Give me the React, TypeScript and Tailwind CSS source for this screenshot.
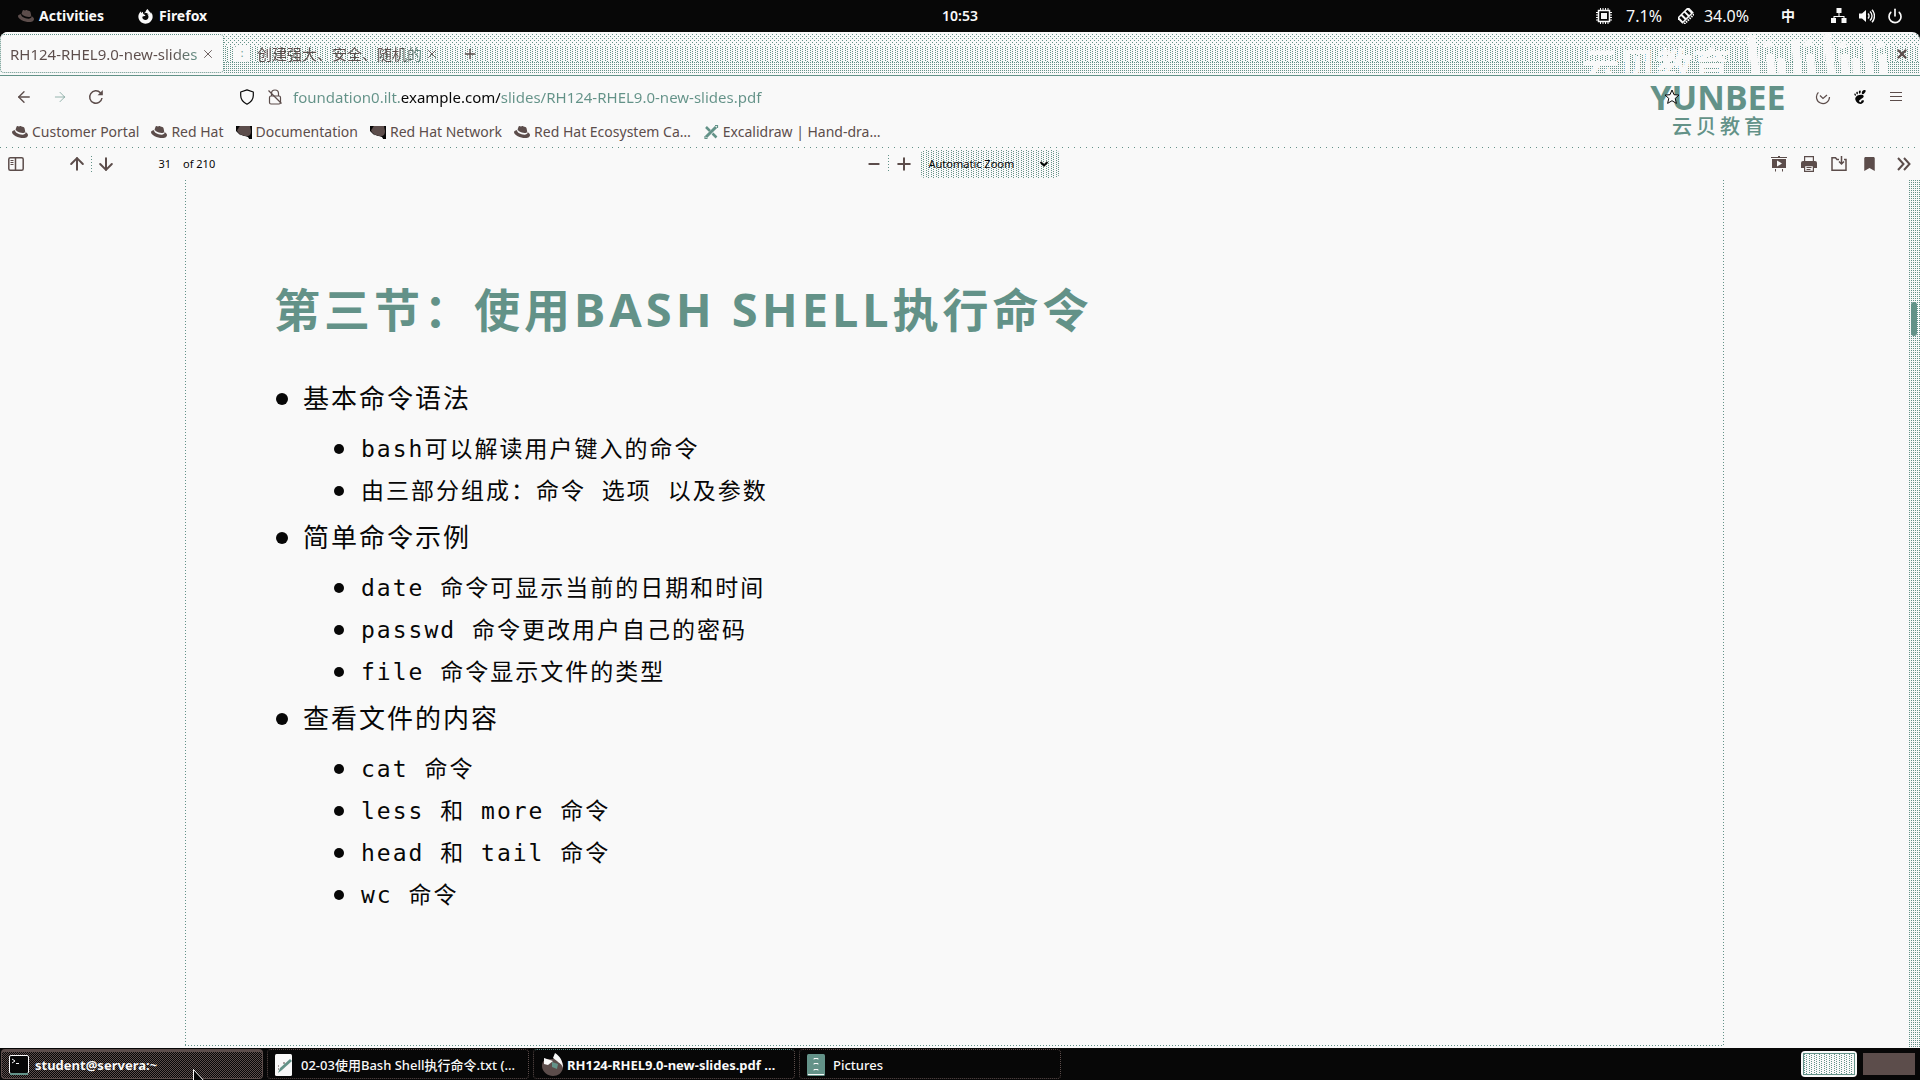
import type { ReactNode } from "react";
import { FaFirefoxBrowser, FaRedhat, FaBookmark } from "react-icons/fa";
import { SiGnome } from "react-icons/si";
import { ArrowDown, ArrowLeft, ArrowRight, ArrowUp, Minus, Plus, Power, X } from "lucide-react";

const DOTS_DENSE =
  "[background-image:conic-gradient(at_1px_1px,transparent_75%,#639288_0)] [background-size:2px_2px]";
const DOTS_MID =
  "[background-image:conic-gradient(at_1px_1px,transparent_75%,#639288_0),conic-gradient(at_1px_1px,transparent_75%,#639288_0)] [background-size:5px_2px] [background-position:0_0,2px_1px]";
const DOTS_LIGHT =
  "[background-image:conic-gradient(at_1px_1px,transparent_75%,#639288_0),conic-gradient(at_1px_1px,transparent_75%,#639288_0)] [background-size:4px_4px] [background-position:0_0,2px_2px]";
const DOTS_BROWN =
  "[background-image:conic-gradient(at_1px_1px,transparent_75%,#5c4d4b_0),conic-gradient(at_1px_1px,transparent_75%,#5c4d4b_0)] [background-size:2px_2px] [background-position:0_0,1px_1px]";
const ROW_DOTS =
  "[background-image:linear-gradient(90deg,#639288_1px,transparent_1px)] [background-size:6px_1px]";
const SLIDE_ROW_DOTS =
  "[background-image:linear-gradient(90deg,#639288_1px,transparent_1px)] [background-size:3px_1px]";
const COLUMN_DOTS =
  "[background-image:linear-gradient(#639288_1px,transparent_1px)] [background-size:1px_3px]";

function IconButton({ label, className, children }: { label: string; className: string; children: ReactNode }) {
  return (
    <button type="button" aria-label={label} className={`flex shrink-0 items-center justify-center ${className}`}>
      {children}
    </button>
  );
}

function ChipIcon() {
  return (
    <svg viewBox="0 0 16 16" className="size-4" stroke="currentColor" fill="none" aria-hidden="true">
      <rect x="2.500" y="2.500" width="11" height="11" strokeWidth="1.500" />
      <rect x="5.500" y="5.500" width="5" height="5" fill="currentColor" />
      <path d="M4.500 0v2M7 0v2M9.500 0v2M12 0v2M4.500 14v2M7 14v2M9.500 14v2M12 14v2M0 4.500h2M0 7h2M0 9.500h2M0 12h2M14 4.500h2M14 7h2M14 9.500h2M14 12h2" />
    </svg>
  );
}

function NetworkIcon() {
  return (
    <svg viewBox="0 0 16 16" className="size-4" fill="currentColor" aria-hidden="true">
      <path d="M5.5 0h5v5h-5zM0 10h5v5H0zM10.5 10h5v5h-5zM7.5 5h1v3h5v2h-1V9h-9v1h-1V8h5z" />
    </svg>
  );
}

function VolumeIcon() {
  return (
    <svg viewBox="0 0 16 16" className="size-4" fill="none" stroke="currentColor" strokeWidth="1.4" aria-hidden="true">
      <path d="M0 5.5h3L7 2v12L3 10.5H0z" fill="currentColor" stroke="none" />
      <path d="M9 5.5a3.5 3.5 0 0 1 0 5M11 3.5a6 6 0 0 1 0 9M13 1.8a9 9 0 0 1 0 12.4" />
    </svg>
  );
}

function MemoryIcon() {
  return (
    <svg viewBox="0 0 16 16" className="size-4" aria-hidden="true">
      <g transform="rotate(-45 8 8)">
        <rect x="0" y="3" width="16" height="8" fill="#f9f9f9" />
        <path d="M2 4.500h2.500v5H2zM6.500 4.500H9v5H6.500zM11 4.500h2.500v5H11z" fill="#070707" />
        <path d="M1 12.500h14" stroke="#f9f9f9" strokeWidth="2" strokeDasharray="1.500 1" />
      </g>
    </svg>
  );
}

function ReloadIcon() {
  return (
    <svg viewBox="0 0 16 16" className="size-4" fill="none" stroke="#5c4d4b" strokeWidth="1.5" aria-hidden="true">
      <path d="M14 9a6.2 6.2 0 1 1-1.6-5.2L14 5.4" />
      <path d="M14.8 1v5.2H9.6z" fill="#5c4d4b" stroke="none" />
    </svg>
  );
}

function ShieldIcon() {
  return (
    <svg viewBox="0 0 16 16" className="size-4" fill="none" stroke="#070707" strokeWidth="1.2" aria-hidden="true">
      <path d="M8 .9 14.3 3v3.6c0 3.8-2.6 6.8-6.3 8.6C4.3 13.400 1.700 10.400 1.700 6.600V3z" strokeLinejoin="round" />
    </svg>
  );
}

function LockSlashIcon() {
  return (
    <svg viewBox="0 0 16 16" className="size-4" fill="none" stroke="#5c4d4b" strokeWidth="1.2" aria-hidden="true">
      <path d="M4.500 7V4.500a3.500 3.500 0 0 1 7 0V7" />
      <rect x="2.500" y="7" width="11" height="8" rx="1.500" />
      <path d="m1.500 1.500 13 13" />
    </svg>
  );
}

function StarIcon() {
  return (
    <svg viewBox="0 0 16 16" className="size-4" fill="#f9f9f9" stroke="#070707" strokeWidth="1" aria-hidden="true">
      <path d="m8 1 2 4.700 5 .4-3.800 3.300 1.200 5L8 11.700 3.600 14.400l1.200-5L1 6.100l5-.4z" />
    </svg>
  );
}

function PocketIcon() {
  return (
    <svg viewBox="0 0 16 16" className="size-4" fill="none" stroke="#5c4d4b" strokeWidth="1.2" aria-hidden="true">
      <path d="M3.400 3.400A6.500 6.500 0 1 0 14.500 8M5 6.500 8 9.500l4-3.500" />
    </svg>
  );
}

function SidebarIcon() {
  return (
    <svg viewBox="0 0 16 16" className="size-4" fill="none" stroke="#5c4d4b" strokeWidth="1.500" aria-hidden="true">
      <rect x=".8" y="1.800" width="14.400" height="12.400" rx="1.500" />
      <path d="M7.500 2v12" />
      <path d="M2.500 4.500h3M2.500 6.500h3M2.500 8.500h3" strokeWidth="1" />
    </svg>
  );
}

function PresentIcon() {
  return (
    <svg viewBox="0 0 16 16" className="size-4" fill="#5c4d4b" aria-hidden="true">
      <path d="M0 1h7V0h2v1h7v1H0z" />
      <path d="M1 3h14v9H1z" />
      <path d="m6 4.500 5 3-5 3z" fill="#f9f9f9" />
      <path d="M4 13h1v2.500H4zM11 13h1v2.500h-1z" />
    </svg>
  );
}

function PrintIcon() {
  return (
    <svg viewBox="0 0 16 16" className="size-4" fill="#5c4d4b" aria-hidden="true">
      <path d="M3 0h10v5h-1.200V1.200H4.200V5H3z" />
      <path d="M2 5h12a2 2 0 0 1 2 2v5h-3V9H3v3H0V7a2 2 0 0 1 2-2z" />
      <path d="M3 9h10v7H3zm1.200 1.200v4.600h7.600v-4.600z" fillRule="evenodd" />
      <path d="M5.500 11h5v1h-5zM5.500 13h4v1h-4z" />
    </svg>
  );
}

function SaveIcon() {
  return (
    <svg viewBox="0 0 16 16" className="size-4" fill="none" stroke="#5c4d4b" strokeWidth="1.500" aria-hidden="true">
      <path d="M8 3.500H6L4.500 1.800H1V14.200h14V3.500h-2" />
      <path d="M10.500 0v8M8 5.500 10.500 8 13 5.500" />
    </svg>
  );
}

function ExcalidrawIcon() {
  return (
    <svg viewBox="0 0 16 16" className="size-4" stroke="#639288" fill="none" aria-hidden="true">
      <path d="M3 13 13 3" strokeWidth="3" />
      <path d="m3 3 4 4M9.500 9.500l4 4" strokeWidth="2.500" />
      <path d="M12 1.500h2.500V4M2 12v2.500h2.500" strokeWidth="1.200" />
    </svg>
  );
}

function ShadowmanIcon() {
  return (
    <svg viewBox="0 0 16 16" className="size-4" aria-hidden="true">
      <path d="M0 2h16v13h-3l-1-2-4-1-4-1-4-4z" fill="#070707" />
      <path d="M1 6c2-1 1-3 3-4h10l1 5c0 3-1 5-4 5-4 0-9-2-10-6z" fill="#5c4d4b" />
      <path d="m3 10 4 2 4 1 2 2-4 .500z" fill="#f9f9f9" />
    </svg>
  );
}

const indicatorText = "text-[16px] leading-5";

function TopBar() {
  return (
    <header className="grid h-8 shrink-0 grid-cols-[1fr_auto_1fr] items-center bg-[#070707] text-[14px] leading-5 text-[#f9f9f9]">
      <div className="flex items-center gap-[34px] pl-[18px] font-bold">
        <button type="button" className="flex items-center gap-[5px]">
          <FaRedhat className="size-4 text-[#5c4d4b]" />
          Activities
        </button>
        <button type="button" className="flex items-center gap-[6px]">
          <FaFirefoxBrowser className="size-[15px]" />
          Firefox
        </button>
      </div>
      <time className="font-semibold">10:53</time>
      <div className="flex items-center justify-end pr-[17px]">
        <span className="mr-3.5">
          <ChipIcon />
        </span>
        <span className={`mr-4 ${indicatorText}`}>7.1%</span>
        <span className="mr-2.5">
          <MemoryIcon />
        </span>
        <span className={`mr-8 ${indicatorText}`}>34.0%</span>
        <button type="button" className="mr-9 font-bold">中</button>
        <button type="button" aria-label="System menu" className="flex items-center gap-3">
          <NetworkIcon />
          <VolumeIcon />
          <Power className="size-4" strokeWidth={2.5} />
        </button>
      </div>
    </header>
  );
}

function StreamMark() {
  return (
    <div className="pointer-events-none absolute top-0.5 right-7 flex items-start gap-4 text-[#f9f9f9]" aria-hidden="true">
      <span className="mt-3 text-[37px] leading-[40px] font-bold">云贝教育</span>
      <svg viewBox="0 0 146 52" className="h-[52px] w-[146px]" fill="none" stroke="#f9f9f9" strokeWidth="8">
        <path d="m5 2 6 46M24 20l2 30M49 6l4 42M35 24l2 24M64 20l2 28M22 7l1 6M62 6l1 6" />
        <path d="m81 0 5 46M98 20l2 28M120 5l5 42M110 24l1 24M136 20l3 28M96 8l1 6M134 8l1 6" />
      </svg>
    </div>
  );
}

function TabStrip() {
  return (
    <div className="relative flex h-11 shrink-0 items-center overflow-hidden rounded-t-lg border-b border-[#639288] bg-[#f9f9f9]">
      <div className="absolute inset-0 flex flex-col py-0.5" aria-hidden="true">
        <div className={`h-3 ${DOTS_LIGHT}`} />
        <div className={`h-4 ${DOTS_MID}`} />
        <div className={`flex-1 ${DOTS_DENSE}`} />
      </div>
      <StreamMark />
      <div role="tablist" className="relative flex h-full items-center">
        <div className="flex h-full w-56 items-center bg-[#f9f9f9] py-0.5">
          <div className="flex h-full w-full items-center rounded border border-dotted border-[#639288] pr-1.5 pl-[9px]">
            <button
              type="button"
              role="tab"
              aria-selected="true"
              className="flex-1 bg-linear-to-r from-[#5c4d4b] from-85% to-[#639288] bg-clip-text text-left text-[15px] leading-5 whitespace-nowrap text-transparent"
            >
              RH124-RHEL9.0-new-slides
            </button>
            <IconButton label="Close tab" className="w-5">
              <X className="size-3.5 text-[#5c4d4b]" strokeWidth={1.5} />
            </IconButton>
          </div>
        </div>
        <div className="flex w-[222px] items-center pl-2.5">
          <span className="mr-[7px] flex size-4 items-center justify-center rounded bg-[#f9f9f9] text-[10px] text-[#639288]">:</span>
          <button
            type="button"
            role="tab"
            aria-selected="false"
            className="bg-linear-to-r from-[#5c4d4b] from-85% to-[#639288] bg-clip-text text-left text-[15px] leading-5 whitespace-nowrap text-transparent"
          >
            创建强大、安全、随机的
          </button>
          <IconButton label="Close tab" className="w-5">
            <X className="size-3.5 text-[#5c4d4b]" strokeWidth={1.5} />
          </IconButton>
        </div>
      </div>
      <IconButton label="New tab" className="relative ml-4 size-4">
        <Plus className="size-4 text-[#5c4d4b]" strokeWidth={2} />
      </IconButton>
      <IconButton label="Close window" className="relative mr-2.5 ml-auto size-4">
        <X className="size-3.5 text-[#5c4d4b]" strokeWidth={4} />
      </IconButton>
    </div>
  );
}

function NavBar() {
  return (
    <div className="flex h-[42px] shrink-0 items-center pr-[17px] pl-4">
      <IconButton label="Back" className="w-4">
        <ArrowLeft className="size-[18px] shrink-0 text-[#5c4d4b]" strokeWidth={1.8} />
      </IconButton>
      <IconButton label="Forward" className="ml-5 w-4">
        <ArrowRight className="size-4 text-[#639288]" strokeWidth={1} />
      </IconButton>
      <IconButton label="Reload" className="ml-5 w-4">
        <ReloadIcon />
      </IconButton>
      <label className="ml-[135px] flex min-w-0 flex-1 items-center">
        <ShieldIcon />
        <span className="mr-2.5 ml-3">
          <LockSlashIcon />
        </span>
        <input
          aria-label="Address"
          defaultValue="foundation0.ilt.example.com/slides/RH124-RHEL9.0-new-slides.pdf"
          className="min-w-0 flex-1 bg-[linear-gradient(90deg,#639288_108px,#070707_108px,#070707_207px,#639288_207px)] bg-clip-text text-[15px] leading-5 text-transparent outline-none"
        />
      </label>
      <IconButton label="Bookmark this page" className="relative z-10 mr-[135px] w-4">
        <StarIcon />
      </IconButton>
      <div className="flex items-center gap-[21px]">
        <IconButton label="Save to Pocket" className="w-4">
          <PocketIcon />
        </IconButton>
        <IconButton label="GNOME extensions" className="w-4">
          <SiGnome className="size-3.5 text-[#070707]" />
        </IconButton>
        <IconButton label="Open menu" className="w-3.5">
          <svg viewBox="0 0 12 12" className="size-3" stroke="#5c4d4b" aria-hidden="true">
            <path d="M0 1.500h12M0 5.500h12M0 9.500h12" />
          </svg>
        </IconButton>
      </div>
    </div>
  );
}

const hat = <FaRedhat className="size-4 text-[#5c4d4b]" />;

const bookmarks = [
  { label: "Customer Portal", icon: hat },
  { label: "Red Hat", icon: hat },
  { label: "Documentation", icon: <ShadowmanIcon /> },
  { label: "Red Hat Network", icon: <ShadowmanIcon /> },
  { label: "Red Hat Ecosystem Ca…", icon: hat },
  { label: "Excalidraw | Hand-dra…", icon: <ExcalidrawIcon /> },
];

function BookmarksBar() {
  return (
    <nav className="flex h-[30px] shrink-0 flex-col">
      <div className="flex flex-1 items-center gap-3 pb-0.5 pl-3">
        {bookmarks.map((b) => (
          <a key={b.label} href="#" className="flex items-center gap-1 text-[14px] leading-5 text-[#5c4d4b]">
            {b.icon}
            {b.label}
          </a>
        ))}
      </div>
      <div className={`h-px ${ROW_DOTS}`} />
    </nav>
  );
}

function Brand() {
  return (
    <div className="pointer-events-none absolute top-[77px] right-[132px] flex w-[140px] flex-col items-center text-[#639288]">
      <span className="text-[34px] leading-10 font-bold">YUNBEE</span>
      <span className="flex gap-1 text-[20px] leading-5 font-medium">
        <span>云</span>
        <span>贝</span>
        <span>教</span>
        <span>育</span>
      </span>
    </div>
  );
}

function PdfToolbar() {
  return (
    <div className="grid h-8 shrink-0 grid-cols-[1fr_auto_1fr] items-center text-[11px] leading-4 text-[#070707]">
      <div className="flex items-center pl-2">
        <IconButton label="Toggle sidebar" className="mr-11 w-4">
          <SidebarIcon />
        </IconButton>
        <IconButton label="Previous page" className="w-[18px]">
          <ArrowUp className="size-5 shrink-0 text-[#5c4d4b]" strokeWidth={2.4} />
        </IconButton>
        <span className={`mx-[5px] h-4 w-px ${COLUMN_DOTS}`} />
        <IconButton label="Next page" className="w-[18px]">
          <ArrowDown className="size-5 shrink-0 text-[#5c4d4b]" strokeWidth={2.4} />
        </IconButton>
        <input aria-label="Page" defaultValue="31" className="ml-3 w-11 bg-transparent text-right outline-none" />
        <span className="ml-3">of 210</span>
      </div>
      <div className="flex items-center pl-1">
        <IconButton label="Zoom out" className="w-4">
          <Minus className="size-4 text-[#5c4d4b]" strokeWidth={3} />
        </IconButton>
        <span className={`mx-1.5 h-[18px] w-px ${COLUMN_DOTS}`} />
        <IconButton label="Zoom in" className="mr-2 w-[18px]">
          <Plus className="size-5 shrink-0 text-[#5c4d4b]" strokeWidth={2.4} />
        </IconButton>
        <div className="relative">
          <select
            aria-label="Zoom"
            className={`h-7 w-[138px] appearance-none rounded-sm pl-2 text-[11px] text-[#070707] ${DOTS_MID}`}
          >
            <option>Automatic Zoom</option>
          </select>
          <svg viewBox="0 0 10 8" className="pointer-events-none absolute top-2.5 right-2.5 h-2 w-2.5" fill="none" stroke="#070707" strokeWidth="2" aria-hidden="true">
            <path d="m1.500 2 3.500 3.500L8.500 2" />
          </svg>
        </div>
      </div>
      <div className="flex items-center justify-end gap-3.5 pr-2">
        <IconButton label="Presentation mode" className="w-4">
          <PresentIcon />
        </IconButton>
        <IconButton label="Print" className="w-4">
          <PrintIcon />
        </IconButton>
        <IconButton label="Save" className="w-4">
          <SaveIcon />
        </IconButton>
        <IconButton label="Current view" className="w-4">
          <FaBookmark className="h-3.5 text-[#5c4d4b]" />
        </IconButton>
        <IconButton label="Tools" className="ml-[5px] w-4">
          <svg viewBox="0 0 16 16" className="size-4" fill="none" stroke="#5c4d4b" strokeWidth="2" aria-hidden="true">
            <path d="m2 2 5.500 6L2 14M8 2l5.500 6L8 14" />
          </svg>
        </IconButton>
      </div>
    </div>
  );
}

const sections = [
  { title: "基本命令语法", items: ["bash可以解读用户键入的命令", "由三部分组成：命令 选项 以及参数"] },
  {
    title: "简单命令示例",
    items: ["date 命令可显示当前的日期和时间", "passwd 命令更改用户自己的密码", "file 命令显示文件的类型"],
  },
  { title: "查看文件的内容", items: ["cat 命令", "less 和 more 命令", "head 和 tail 命令", "wc 命令"] },
];

function Slide() {
  return (
    <div className="mr-[185px] mb-0.5 ml-[185px] flex flex-1 flex-col">
      <div className="flex flex-1">
        <div className={`w-px ${COLUMN_DOTS}`} />
        <article className="flex-1 pt-[97px] pl-[88px]">
          <h1 className="text-[46px] leading-[64px] font-bold tracking-[4px] text-[#639288]">
            第三节：使用<span className="text-[47px]">BASH SHELL</span>执行命令
          </h1>
          <ul className="mt-8 font-['DejaVu_Sans_Mono','Noto_Sans_CJK_SC',monospace] text-[#070707]">
            {sections.map((s) => (
              <li key={s.title}>
                <div className="flex h-[52px] items-center pl-0.5 text-[26px] leading-9 tracking-[2px]">
                  <span className="mr-[15px] size-3 rounded-full bg-[#070707]" />
                  {s.title}
                </div>
                <ul className="mt-[3px]">
                  {s.items.map((item) => (
                    <li key={item} className="flex h-[42px] items-center pl-[60px] text-[23px] leading-8 tracking-[2px]">
                      <span className="mr-[17px] size-2.5 rounded-full bg-[#070707]" />
                      {item}
                    </li>
                  ))}
                </ul>
              </li>
            ))}
          </ul>
        </article>
        <div className={`w-px ${COLUMN_DOTS}`} />
      </div>
      <div className={`h-px ${SLIDE_ROW_DOTS}`} />
    </div>
  );
}

function Viewer() {
  return (
    <main className="flex flex-1">
      <div className="flex flex-1 flex-col">
        <Slide />
      </div>
      <div className={`relative w-[11px] ${DOTS_DENSE}`}>
        <div className="absolute top-[122px] left-0.5 h-[34px] w-1.5 rounded-sm bg-[#639288]" />
      </div>
    </main>
  );
}

const tasks = [
  {
    label: "student@servera:~",
    style: `border-[#5c4d4b] border-t-3 font-bold ${DOTS_BROWN}`,
    gap: "gap-1.5",
    icon: (
      <svg viewBox="0 0 20 20" className="size-5" fill="none" aria-hidden="true">
        <rect x=".5" y=".5" width="19" height="18" rx="1.500" fill="#070707" stroke="#f9f9f9" />
        <path d="m3 4 3 2-3 2M7 8.500h3" stroke="#f9f9f9" />
        <path d="M1 19h18" stroke="#639288" strokeWidth="2" />
      </svg>
    ),
  },
  {
    label: "02-03使用Bash Shell执行命令.txt (…",
    style: "border-dotted border-[#5c4d4b] pt-0.5 font-medium",
    gap: "gap-2",
    icon: (
      <svg viewBox="0 0 18 22" className="h-[22px] w-[18px]" aria-hidden="true">
        <rect width="17" height="22" rx="1.500" fill="#f9f9f9" />
        <path d="M3 19 5 14 15 5l2 2-10 9z" fill="#639288" />
        <path d="m3 12 1 0M3 15h1M8 9h2" stroke="#5c4d4b" />
      </svg>
    ),
  },
  {
    label: "RH124-RHEL9.0-new-slides.pdf …",
    style: "border-dotted border-[#5c4d4b] border-t-[#639288] pt-0.5 font-bold",
    gap: "gap-0.5",
    icon: (
      <svg viewBox="0 0 24 24" className="size-6" aria-hidden="true">
        <path d="M1 13c0-4 2-7 6-7h10c4 1 6 5 5 9-1 5-5 8-10 8S1 19 1 13z" fill="#5c4d4b" />
        <path d="M14 0c5 3 8 8 8 15-1-4-4-5-6-7l-4-3zM3 5l9 3-5 4-4-1z" fill="#f9f9f9" />
        <path d="m11 9 6 2-1 5-5-2z" fill="#639288" />
      </svg>
    ),
  },
  {
    label: "Pictures",
    style: "border-dotted border-[#5c4d4b] pt-0.5 font-medium",
    gap: "gap-2",
    icon: (
      <svg viewBox="0 0 18 22" className="h-[22px] w-[18px]" aria-hidden="true">
        <rect width="18" height="22" rx="1.500" fill="#639288" />
        <path d="M1 20.500h16" stroke="#f9f9f9" />
        <path d="M7 5.500V4.500h4v1M7 10.500v-1h4v1M7 16.500v-1h4v1" stroke="#f9f9f9" fill="none" />
      </svg>
    ),
  },
];

function Taskbar() {
  return (
    <footer className="relative flex h-8 shrink-0 items-center bg-[#070707] pr-[5px] pl-px text-[#f9f9f9]">
      <div className="flex gap-1">
        {tasks.map((t) => (
          <button
            key={t.label}
            type="button"
            className={`flex h-[30px] w-[262px] items-center rounded-sm border pl-[7px] text-[13px] leading-5 whitespace-nowrap ${t.gap} ${t.style}`}
          >
            {t.icon}
            {t.label}
          </button>
        ))}
      </div>
      <svg viewBox="0 0 12 12" className="absolute bottom-0 left-[192px] size-3" fill="#070707" stroke="#f9f9f9" aria-hidden="true">
        <path d="M1.500 14V1.500L13 14" />
      </svg>
      <div className="ml-auto flex items-center gap-1.5">
        <button type="button" aria-label="Workspace 1" className="h-[26px] w-14 rounded-sm bg-[#f9f9f9] p-0.5">
          <span className={`block h-full border border-[#639288] ${DOTS_MID}`} />
        </button>
        <button type="button" aria-label="Workspace 2" className="h-[22px] w-[52px] bg-[#5c4d4b]" />
      </div>
    </footer>
  );
}

export default function App() {
  return (
    <div
      lang="zh-CN"
      className="relative flex min-h-screen flex-col bg-[#070707] font-['Noto_Sans','Noto_Sans_CJK_SC',sans-serif]"
    >
      <TopBar />
      <TabStrip />
      <div className="flex flex-1 flex-col bg-[#f9f9f9]">
        <NavBar />
        <BookmarksBar />
        <PdfToolbar />
        <Viewer />
      </div>
      <Brand />
      <Taskbar />
    </div>
  );
}
